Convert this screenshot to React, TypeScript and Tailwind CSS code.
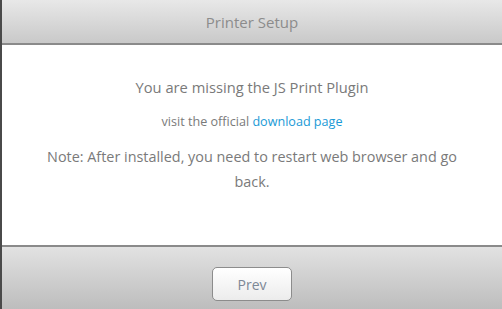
export default function App() {
  return (
    <div
      className="flex h-[309px] w-[502px] bg-[#4a4a4a] pl-[2px]"
      style={{ fontFamily: '"Open Sans", "Liberation Sans", sans-serif' }}
    >
      <div className="flex flex-1 flex-col bg-white">
        {/* Header */}
        <div className="flex h-[45px] items-center justify-center border-b-2 border-[#8a8a8a] bg-gradient-to-b from-[#e8e8e8] to-[#c9c9c9]">
          <span className="pt-[1px] text-[15px] text-[#8c8c8c]">Printer Setup</span>
        </div>

        {/* Body */}
        <div className="flex flex-1 flex-col items-center px-[36px] pt-[30px] text-center text-[#7a7a7a]">
          <p className="text-[14.7px] leading-[24px]">You are missing the JS Print Plugin</p>
          <p className="mt-[11px] text-[12.6px] leading-[24px]">
            visit the official <a className="text-[#1a9ad6]">download page</a>
          </p>
          <p className="mt-[10px] text-[14.4px] leading-[25px]">
            Note: After installed, you need to restart web browser and go back.
          </p>
        </div>

        {/* Footer */}
        <div className="flex h-[64px] items-start justify-center border-t-2 border-[#8a8a8a] bg-gradient-to-b from-[#e2e2e2] to-[#bdbdbd] pt-[20px]">
          <button className="h-[34px] w-[80px] rounded-[5px] border border-[#8c8c8c] bg-gradient-to-b from-white to-[#ececec] text-[14px] text-[#7d8896]">
            Prev
          </button>
        </div>
      </div>
    </div>
  );
}
